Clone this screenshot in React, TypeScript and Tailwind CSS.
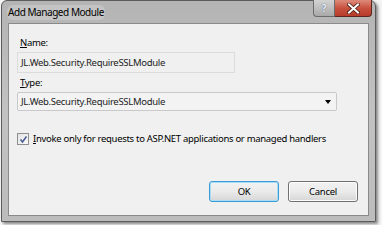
import React from "react";

const font = { fontFamily: '"Noto Sans", "Open Sans", sans-serif' };

const CloseGlyph = () => (
  <svg width="13" height="11" viewBox="0 0 13 11">
    <path d="M2 1.5 L11 9.5 M11 1.5 L2 9.5" stroke="#4a1a14" strokeWidth="3.6" strokeLinecap="square" />
    <path d="M2 1.5 L11 9.5 M11 1.5 L2 9.5" stroke="#ffffff" strokeWidth="2" strokeLinecap="square" />
  </svg>
);

const Check = () => (
  <svg width="9" height="9" viewBox="0 0 9 9">
    <path d="M1.5 4.5 L3.5 7 L7.5 1.5" fill="none" stroke="#4a5f97" strokeWidth="1.6" />
  </svg>
);

const App = () => {
  return (
    <div className="w-[382px] h-[225px] bg-[#f4f4f4] pl-[1px] overflow-hidden" style={font}>
      <div className="w-[375px] h-[222px] flex flex-col rounded-t-[6px] border border-[#5c5c5c] bg-gradient-to-b from-[#b4b4b4] via-[#c2c2c2] to-[#bcbcbc] shadow-[2px_2px_3px_rgba(0,0,0,0.45)]">
        {/* title bar */}
        <div className="h-[22px] flex items-start justify-between pl-[5px]">
          <div className="mt-[4px] px-[1px] rounded-[6px] bg-[#d4d4d4]/50 text-[10px] tracking-[-0.45px] leading-[15px] text-black">
            Add Managed Module
          </div>
          <div className="flex mr-[3px] -mt-[1px]">
            <div className="w-[22px] h-[17px] flex items-center justify-center border border-[#6b6b6b] border-t-0 rounded-bl-[4px] bg-gradient-to-b from-[#d3d3d3] to-[#a9a9a9] text-[11px] font-bold text-[#e8eef8] [text-shadow:0_0_1px_#33405a]">
              ?
            </div>
            <div className="w-[37px] h-[17px] flex items-center justify-center border border-[#5a2620] border-t-0 border-l-0 rounded-br-[4px] bg-gradient-to-b from-[#dd8a7a] via-[#c8523f] to-[#b83a2a]">
              <CloseGlyph />
            </div>
          </div>
        </div>
        {/* client */}
        <div className="flex-1 mx-[6px] mb-[5px] border border-[#8a8a8a] bg-[#f0f0f0] flex flex-col text-[9.5px] tracking-[-0.3px] text-black pl-[8px] pr-[10px]">
          <div className="mt-[12px] ml-[3px] leading-[14px]">
            <span className="underline">N</span>ame:
          </div>
          <div className="mt-[2px] w-[218px] h-[21px] border border-[#dcdcdc] bg-[#f0f0f0] flex items-center pl-[3px] leading-[14px] text-[#222]">
            JL.Web.Security.RequireSSLModule
          </div>
          <div className="mt-[3px] ml-[3px] leading-[14px]">
            <span className="underline">T</span>ype:
          </div>
          <div className="mt-[2px] w-[320px] h-[19px] border border-[#c9c9c9] rounded-[2px] bg-[#f3f3f3] flex items-center justify-between pl-[3px] pr-[5px] leading-[14px] text-[#222]">
            <span>JL.Web.Security.RequireSSLModule</span>
            <span className="w-0 h-0 border-l-[3px] border-r-[3px] border-t-[4px] border-l-transparent border-r-transparent border-t-black" />
          </div>
          <div className="mt-[21px] flex items-center">
            <div className="w-[12px] h-[12px] border border-[#8e8f8f] bg-gradient-to-br from-[#e4e4e4] to-[#fafafa] flex items-center justify-center">
              <Check />
            </div>
            <span className="ml-[4px] leading-[14px] whitespace-nowrap">
              <span className="underline">I</span>nvoke only for requests to ASP.NET applications or managed handlers
            </span>
          </div>
          <div className="mt-auto mb-[13px] flex justify-end gap-[9px] pr-[0px]">
            <button className="w-[70px] h-[21px] rounded-[3px] border border-[#3c9ad6] bg-gradient-to-b from-[#f2f2f2] via-[#ebebeb] to-[#d6d6d6] shadow-[inset_0_0_0_1px_#a8def8] leading-[14px]">
              OK
            </button>
            <button className="w-[70px] h-[21px] rounded-[3px] border border-[#707070] bg-gradient-to-b from-[#f2f2f2] via-[#ebebeb] to-[#d6d6d6] shadow-[inset_0_0_0_1px_#fcfcfc] leading-[14px]">
              Cancel
            </button>
          </div>
        </div>
      </div>
    </div>
  );
};

export default App;
